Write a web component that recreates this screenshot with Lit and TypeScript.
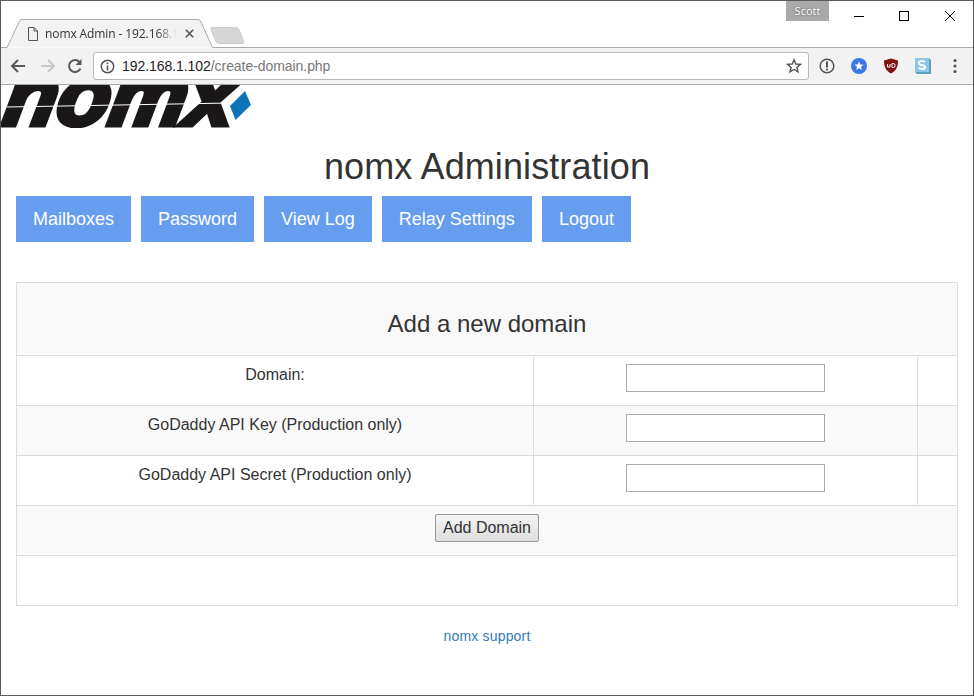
import { LitElement, html, css, svg } from "lit";
import { customElement } from "lit/decorators.js";

const ico = (w: number, h: number, body: unknown) =>
  html`<svg width=${w} height=${h} viewBox="0 0 ${w} ${h}" fill="none">${body}</svg>`;

@customElement("app-root")
export class AppRoot extends LitElement {
  static styles = css`
    :host { display: block; height: 696px; box-sizing: border-box; border: 1px solid #5a5a5a; overflow: hidden; background: #fff; font-family: "Liberation Sans", Arial, sans-serif; color: #333; }
    .strip { height: 47px; position: relative; display: flex; justify-content: flex-end; align-items: flex-start; background: #fff; }
    .tabshape { position: absolute; left: 0; top: 0; }
    .tabicon { position: absolute; left: 26px; top: 26px; }
    .tabtitle { position: absolute; left: 44px; top: 25px; width: 132px; overflow: hidden; white-space: nowrap; font: 12px/16px "Open Sans", "Liberation Sans", sans-serif; color: #333; letter-spacing: -0.1px; -webkit-mask-image: linear-gradient(90deg,#000 85%,transparent); }
    .tabclose { position: absolute; left: 184px; top: 28px; }
    .user { width: 43px; height: 20px; margin-right: 144px; background: #a9a9a9; color: #fff; font: 11px/20px "Open Sans", sans-serif; text-align: center; text-shadow: 0 0 2px #555; }
    .wc { position: absolute; top: 0; width: 46px; height: 29px; display: flex; align-items: center; justify-content: center; }
    .toolbar { height: 36px; background: #f2f2f2; border-bottom: 1px solid #a9a9a9; display: flex; align-items: center; }
    .nav { width: 30px; display: flex; justify-content: center; }
    .omni { box-sizing: border-box; width: 716px; height: 28px; margin-left: 6px; background: #fff; border: 1px solid #b8b8b8; border-radius: 3px; display: flex; align-items: center; padding: 0 6px; }
    .url { flex: 1; margin-left: 7px; font: 14px/20px "Liberation Sans", sans-serif; letter-spacing: -0.06px; color: #777; }
    .url b { font-weight: normal; color: #222; }
    .exts { display: flex; margin-left: 2px; }
    .ext { width: 32px; height: 28px; display: flex; align-items: center; justify-content: center; }
    .logo { display: block; height: 43px; }
    h1 { margin: 19px 0 9px; font-size: 36px; font-weight: 400; line-height: 40px; letter-spacing: 0.1px; text-align: center; color: #333; }
    nav { display: flex; gap: 10px; padding-left: 15px; }
    nav a { display: block; height: 46px; padding: 0 17px; background: #679def; color: #fff; font-size: 18px; line-height: 46px; }
    table { width: 942px; margin: 40px 0 0 15px; border-collapse: collapse; table-layout: fixed; font-size: 16px; }
    td, th { border: 1px solid #ddd; padding: 8px; vertical-align: top; text-align: center; line-height: 22px; font-weight: 400; height: 49px; box-sizing: border-box; }
    tr.alt td, tr.alt th { background: #f9f9f9; }
    th.head { height: 73px; font-size: 24px; line-height: 26px; padding: 28px 8px 0; }
    tr.row td, tr.foot td, tr.blank td { height: 50px; }
    input { display: block; box-sizing: border-box; width: 199px; height: 28px; margin: 0 auto; border: 1px solid #a9a9a9; border-radius: 0; background: #fff; padding: 0; }
    button { display: block; box-sizing: border-box; width: 104px; height: 28px; margin: 0 auto; padding: 0; border: 1px solid #999; border-radius: 2px; background: linear-gradient(#f4f4f4,#dedede); color: #333; font: 16px "Liberation Sans", sans-serif; }
    footer { margin-top: 20px; text-align: center; font-size: 14px; line-height: 20px; letter-spacing: 0.18px; }
    footer a { color: #337ab7; text-decoration: none; }
  `;

  render() {
    const row = (label: string, alt: boolean) => html`<tr class="row ${alt ? "alt" : ""}"><td>${label}</td><td><input type="text" /></td><td></td></tr>`;
    return html`
      <div class="strip">
        <svg class="tabshape" width="972" height="47" fill="none">
          <path d="M-1 46.5H6L18.5 20Q19.5 18.5 22 18.5H196Q198.5 18.5 199.5 20L211.5 46.5H973" stroke="#a9a9a9" fill="#f2f2f2"/>
          <path d="M211 26.5Q209 26.5 210 28.5L215 40.5Q216 42.5 218 42.5H241Q243.5 42.5 242.5 40L238 28.5Q237 26.5 235 26.5Z" fill="#d6d6d6" stroke="#cdcdcd"/>
        </svg>
        <svg class="tabicon" width="11" height="14" fill="none" stroke="#555"><path d="M1.5 .5H7L10.5 4V13.5H1.5ZM7 .5V4H10.5"/></svg>
        <div class="tabtitle">nomx Admin - 192.168.1.102</div>
        <svg class="tabclose" width="9" height="9" stroke="#555" stroke-width="1.6"><path d="M.8.8 8.2 8.2M8.2.8.8 8.2"/></svg>
        <div class="user">Scott</div>
        <div class="wc" style="left:835px">${ico(12, 12, svg`<path d="M1 6.5H11" stroke="#000"/>`)}</div>
        <div class="wc" style="left:880px">${ico(12, 12, svg`<rect x="1.5" y="1.5" width="9" height="9" stroke="#000"/>`)}</div>
        <div class="wc" style="left:926px">${ico(12, 12, svg`<path d="M1 1 11 11M11 1 1 11" stroke="#000"/>`)}</div>
      </div>
      <div class="toolbar">
        <span class="nav" style="margin-left:2px">${ico(16, 16, svg`<path d="M15 8H2M8 2 2 8l6 6" stroke="#5a5a5a" stroke-width="2"/>`)}</span>
        <span class="nav">${ico(16, 16, svg`<path d="M1 8H14M8 2l6 6-6 6" stroke="#c8c8c8" stroke-width="2"/>`)}</span>
        <span class="nav" style="width:24px">${ico(16, 16, svg`<path d="M13.5 10.5A6 6 0 1 1 12.5 4" stroke="#5a5a5a" stroke-width="2"/><path d="M14.5 1V7H8.5Z" fill="#5a5a5a"/>`)}</span>
        <div class="omni">
          ${ico(15, 15, svg`<circle cx="7.5" cy="7.5" r="6.2" stroke="#555" stroke-width="1.5"/><path d="M7.5 6.5V11.5M7.5 3.5V5.2" stroke="#555" stroke-width="1.6"/>`)}
          <div class="url"><b>192.168.1.102</b>/create-domain.php</div>
          ${ico(16, 16, svg`<path d="M8 1.8 9.8 6l4.6.4-3.5 3 1.1 4.5L8 11.5 4 13.9l1.1-4.5-3.5-3L6.2 6Z" stroke="#555" stroke-width="1.4"/>`)}
        </div>
        <div class="exts">
          <span class="ext">${ico(16, 16, svg`<circle cx="8" cy="8" r="6.8" stroke="#555" stroke-width="1.5"/><path d="M8 3.5V9.5M8 10.8V12.5" stroke="#555" stroke-width="2"/>`)}</span>
          <span class="ext">${ico(16, 16, svg`<circle cx="8" cy="8" r="8" fill="#3b78e7"/><path d="M8 3.5 9.3 6.6l3.2.2-2.500 2 .8 3.2L8 10.3 5.2 12l.8-3.2-2.5-2 3.2-.2Z" fill="#fff"/>`)}</span>
          <span class="ext">${ico(16, 16, svg`<path d="M8 .5 15 2.500C15 9 13 13 8 15.500 3 13 1 9 1 2.500Z" fill="#7f0f10"/><path d="M4.500 6V9H7V6M9 5.500V9.500H10.500Q12 9.500 12 7.500 12 5.500 10.500 5.500Z" stroke="#fff"/>`)}</span>
          <span class="ext">${ico(16, 16, svg`<rect x="0" y="0" width="14" height="14" fill="#8cc6ea"/><path d="M14 0 16 2V16H2L0 14H14Z" fill="#5b9fb8"/><path d="M10 4.200Q9 3 7 3 4 3 4 5.200 4 7 7 7.300 10 7.700 10 9.200 10 11 7 11 5 11 3.800 9.600" stroke="#fff" stroke-width="2"/>`)}</span>
          <span class="ext">${ico(4, 16, svg`<circle cx="2" cy="2.500" r="1.600" fill="#555"/><circle cx="2" cy="8" r="1.600" fill="#555"/><circle cx="2" cy="13.500" r="1.600" fill="#555"/>`)}</span>
        </div>
      </div>

      <svg class="logo" width="252" height="43" viewBox="0 0 252 43">
        <g transform="translate(7 0) skewX(-10)">
          <text x="0" y="39.500" textLength="230" lengthAdjust="spacingAndGlyphs" font-family="Liberation Sans" font-weight="700" font-style="italic" font-size="84" fill="#1a1718" stroke="#1a1718" stroke-width="5">nomx</text>
        </g>
        <path d="M6 22 229 18" stroke="#fff" stroke-width="1.2"/>
        <path d="M244 6 250 20 234.500 35 229 21Z" fill="#0f73ba"/>
      </svg>

      <h1>nomx Administration</h1>
      <nav>
        <a>Mailboxes</a><a>Password</a><a>View Log</a><a>Relay Settings</a><a>Logout</a>
      </nav>
      <table>
        <colgroup><col style="width:517px"/><col style="width:384px"/><col/></colgroup>
        <tr class="alt"><th class="head" colspan="3">Add a new domain</th></tr>
        ${row("Domain:", false)}
        ${row("GoDaddy API Key (Production only)", true)}
        ${row("GoDaddy API Secret (Production only)", false)}
        <tr class="foot alt"><td colspan="3"><button>Add Domain</button></td></tr>
        <tr class="blank"><td colspan="3"></td></tr>
      </table>
      <footer><a>nomx support</a></footer>
    `;
  }
}
